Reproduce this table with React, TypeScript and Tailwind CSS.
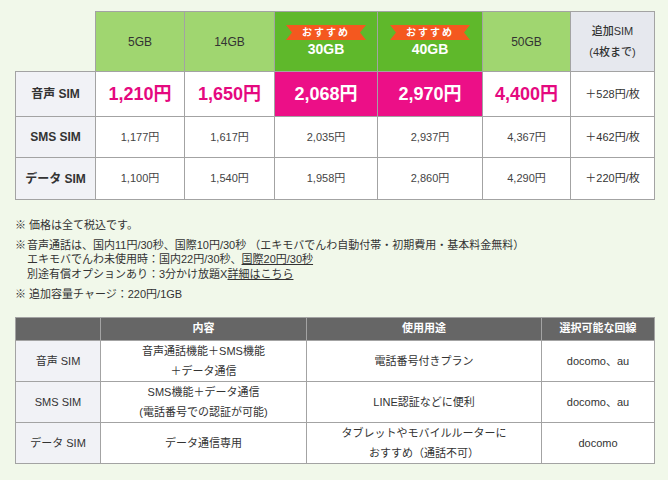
import React from "react";

const font = { fontFamily: '"Liberation Sans", "Noto Sans CJK JP", sans-serif' };

function Ribbon() {
  return (
    <div className="relative mx-auto h-[15px] w-[80px]">
      <svg className="absolute inset-0" width="80" height="15" viewBox="0 0 80 15">
        <polygon points="0,0 80,0 74,7.5 80,15 0,15 6,7.5" fill="#f4581f" />
      </svg>
      <span className="relative block text-center text-[10px] leading-[15px] tracking-[2px] text-white">おすすめ</span>
    </div>
  );
}

const rows = [
  { label: "音声 SIM", vals: ["1,210円", "1,650円", "2,068円", "2,970円", "4,400円"], extra: "＋528円/枚", big: true, h: "h-[45px]" },
  { label: "SMS SIM", vals: ["1,177円", "1,617円", "2,035円", "2,937円", "4,367円"], extra: "＋462円/枚", big: false, h: "h-[41px]" },
  { label: "データ SIM", vals: ["1,100円", "1,540円", "1,958円", "2,860円", "4,290円"], extra: "＋220円/枚", big: false, h: "h-[42px]" },
];

const widths = ["w-[80px]", "w-[89px]", "w-[90px]", "w-[103px]", "w-[105px]", "w-[88px]", "w-[84px]"];

export default function App() {
  return (
    <div className="min-h-[480px] w-[668px] bg-[#f1f8ea] pl-[15px] pt-[11px] text-[#333]" style={font}>
      <table className="table-fixed border-collapse">
        <thead>
          <tr className="h-[60px]">
            <th className={`${widths[0]} p-0`}></th>
            <th className={`${widths[1]} border border-[#a3a3a3] bg-[#a0d670] p-0 text-[12px] font-medium text-[#333]`}>5GB</th>
            <th className={`${widths[2]} border border-[#a3a3a3] bg-[#a0d670] p-0 text-[12px] font-medium text-[#333]`}>14GB</th>
            <th className={`${widths[3]} border border-[#a3a3a3] bg-[#5fb82b] p-0 align-middle`}>
              <Ribbon />
              <div className="text-[14px] font-bold leading-[19px] text-white">30GB</div>
            </th>
            <th className={`${widths[4]} border border-[#a3a3a3] bg-[#5fb82b] p-0 align-middle`}>
              <Ribbon />
              <div className="text-[14px] font-bold leading-[19px] text-white">40GB</div>
            </th>
            <th className={`${widths[5]} border border-[#a3a3a3] bg-[#a0d670] p-0 text-[12px] font-medium text-[#333]`}>50GB</th>
            <th className={`${widths[6]} border border-[#a3a3a3] bg-[#e6e8ee] p-0 text-[11px] font-medium leading-[21px] text-[#333]`}>
              追加SIM
              <br />
              (4枚まで)
            </th>
          </tr>
        </thead>
        <tbody>
          {rows.map((r) => (
            <tr key={r.label} className={r.h}>
              <td className="border border-[#a3a3a3] bg-[#f1f2f6] p-0 text-center text-[12px] font-bold text-[#333]">{r.label}</td>
              {r.vals.map((v, i) => {
                const hot = i === 2 || i === 3;
                if (r.big) {
                  return (
                    <td
                      key={i}
                      className={`border border-[#a3a3a3] p-0 text-center text-[18px] font-bold ${hot ? "bg-[#ec0f87] text-white" : "bg-white text-[#e5097f]"}`}
                    >
                      {v}
                    </td>
                  );
                }
                return (
                  <td key={i} className="border border-[#a3a3a3] bg-white p-0 text-center text-[11px] text-[#444]">
                    {v}
                  </td>
                );
              })}
              <td className="border border-[#a3a3a3] bg-white p-0 text-center text-[11px] text-[#333]">{r.extra}</td>
            </tr>
          ))}
        </tbody>
      </table>

      <div className="mt-[18px] text-[11px] leading-[14.5px] text-[#333]">
        <p>※ 価格は全て税込です。</p>
        <div className="mt-[5px] flex">
          <span className="w-[12px] shrink-0">※</span>
          <div>
            <p>音声通話は、国内11円/30秒、国際10円/30秒 （エキモバでんわ自動付帯・初期費用・基本料金無料）</p>
            <p>
              エキモバでんわ未使用時：国内22円/30秒、<span className="underline">国際20円/30秒</span>
            </p>
            <p>
              別途有償オプションあり：3分かけ放題X<span className="underline">詳細はこちら</span>
            </p>
          </div>
        </div>
        <p className="mt-[6px]">※ 追加容量チャージ：220円/1GB</p>
      </div>

      <table className="mt-[15px] table-fixed border-collapse text-[11px] text-[#333]">
        <thead>
          <tr className="h-[23px] bg-[#666666] text-white">
            <th className="w-[85px] border border-[#a3a3a3] p-0 font-bold"></th>
            <th className="w-[206px] border border-[#a3a3a3] p-0 font-bold">内容</th>
            <th className="w-[235px] border border-[#a3a3a3] p-0 font-bold">使用用途</th>
            <th className="w-[113px] border border-[#a3a3a3] p-0 font-bold">選択可能な回線</th>
          </tr>
        </thead>
        <tbody className="leading-[20px]">
          <tr className="h-[40px]">
            <td className="border border-[#a3a3a3] bg-[#f1f2f6] p-0 text-center">音声 SIM</td>
            <td className="border border-[#a3a3a3] bg-white p-0 text-center">
              音声通話機能＋SMS機能
              <br />
              ＋データ通信
            </td>
            <td className="border border-[#a3a3a3] bg-white p-0 text-center">電話番号付きプラン</td>
            <td className="border border-[#a3a3a3] bg-white p-0 text-center">docomo、au</td>
          </tr>
          <tr className="h-[40px]">
            <td className="border border-[#a3a3a3] bg-[#f1f2f6] p-0 text-center">SMS SIM</td>
            <td className="border border-[#a3a3a3] bg-white p-0 text-center">
              SMS機能＋データ通信
              <br />
              (電話番号での認証が可能)
            </td>
            <td className="border border-[#a3a3a3] bg-white p-0 text-center">LINE認証などに便利</td>
            <td className="border border-[#a3a3a3] bg-white p-0 text-center">docomo、au</td>
          </tr>
          <tr className="h-[41px]">
            <td className="border border-[#a3a3a3] bg-[#f1f2f6] p-0 text-center">データ SIM</td>
            <td className="border border-[#a3a3a3] bg-white p-0 text-center">データ通信専用</td>
            <td className="border border-[#a3a3a3] bg-white p-0 text-center">
              タブレットやモバイルルーターに
              <br />
              おすすめ（通話不可）
            </td>
            <td className="border border-[#a3a3a3] bg-white p-0 text-center">docomo</td>
          </tr>
        </tbody>
      </table>
    </div>
  );
}
